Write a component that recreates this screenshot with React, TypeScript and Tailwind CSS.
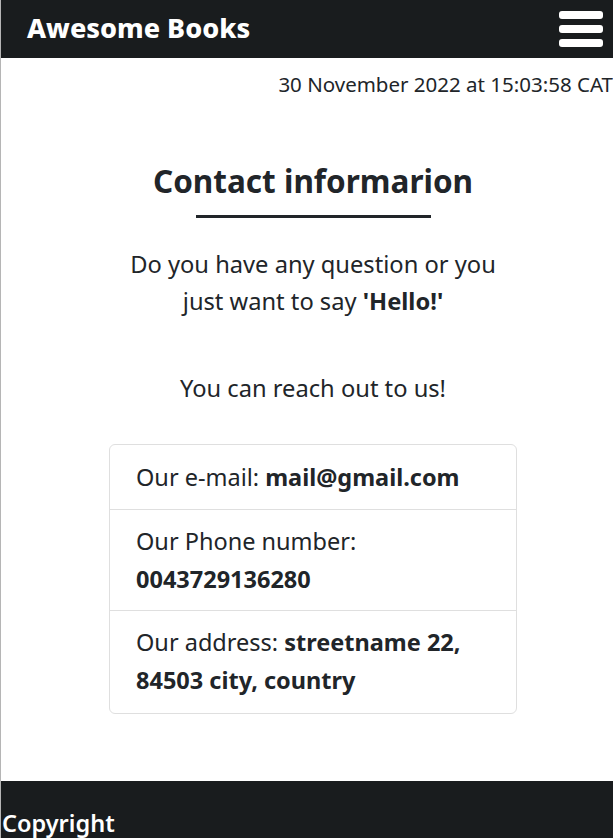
export default function App() {
  return (
    <div
      className="min-h-[838px] flex flex-col bg-white text-[#212529] border-l border-[#b5b5b5] overflow-hidden"
      style={{ fontFamily: '"Noto Sans", "Open Sans", sans-serif' }}
    >
      <header className="h-[58px] bg-[#191c1e] flex items-center justify-between pl-[26px] pr-[10px]">
        <h1 className="text-[27px] font-extrabold text-white leading-[34px] mb-[3px]">Awesome Books</h1>
        <button className="flex flex-col gap-[6px] w-[44px]">
          <span className="block h-[8px] rounded-[3px] bg-white" />
          <span className="block h-[8px] rounded-[3px] bg-white" />
          <span className="block h-[8px] rounded-[3px] bg-white" />
        </button>
      </header>

      <p className="text-right text-[20.5px] mt-[12px] leading-[28px] whitespace-nowrap">
        30 November 2022 at 15:03:58 CAT
      </p>

      <main className="flex flex-col items-center pl-[12px]">
        <h2 className="mt-[63px] text-[31.5px] font-bold leading-[40px]">Contact informarion</h2>
        <div className="w-[235px] h-[3px] bg-[#212529] mt-[14px]" />
        <p className="mt-[28px] w-[390px] text-center text-[23.7px] leading-[37px]">
          Do you have any question or you just want to say <strong>'Hello!'</strong>
        </p>
        <p className="mt-[50px] text-center text-[23.7px] leading-[37px]">You can reach out to us!</p>

        <ul className="mt-[37px] w-[408px] border border-[#dfdfdf] rounded-[6px] text-[23.5px] leading-[38px]">
          <li className="px-[26px] py-[13px]">
            Our e-mail: <strong>mail@gmail.com</strong>
          </li>
          <li className="px-[26px] py-[12px] border-t border-[#dfdfdf]">
            Our Phone number: <strong>0043729136280</strong>
          </li>
          <li className="px-[26px] pt-[12px] pb-[14px] border-t border-[#dfdfdf]">
            Our address: <strong>streetname 22, 84503 city, country</strong>
          </li>
        </ul>
      </main>

      <footer className="mt-[67px] h-[70px] bg-[#191c1e] pt-[27px]">
        <p className="text-white text-[23.5px] font-semibold leading-[30px] ml-[1px]">Copyright</p>
      </footer>
    </div>
  );
}
